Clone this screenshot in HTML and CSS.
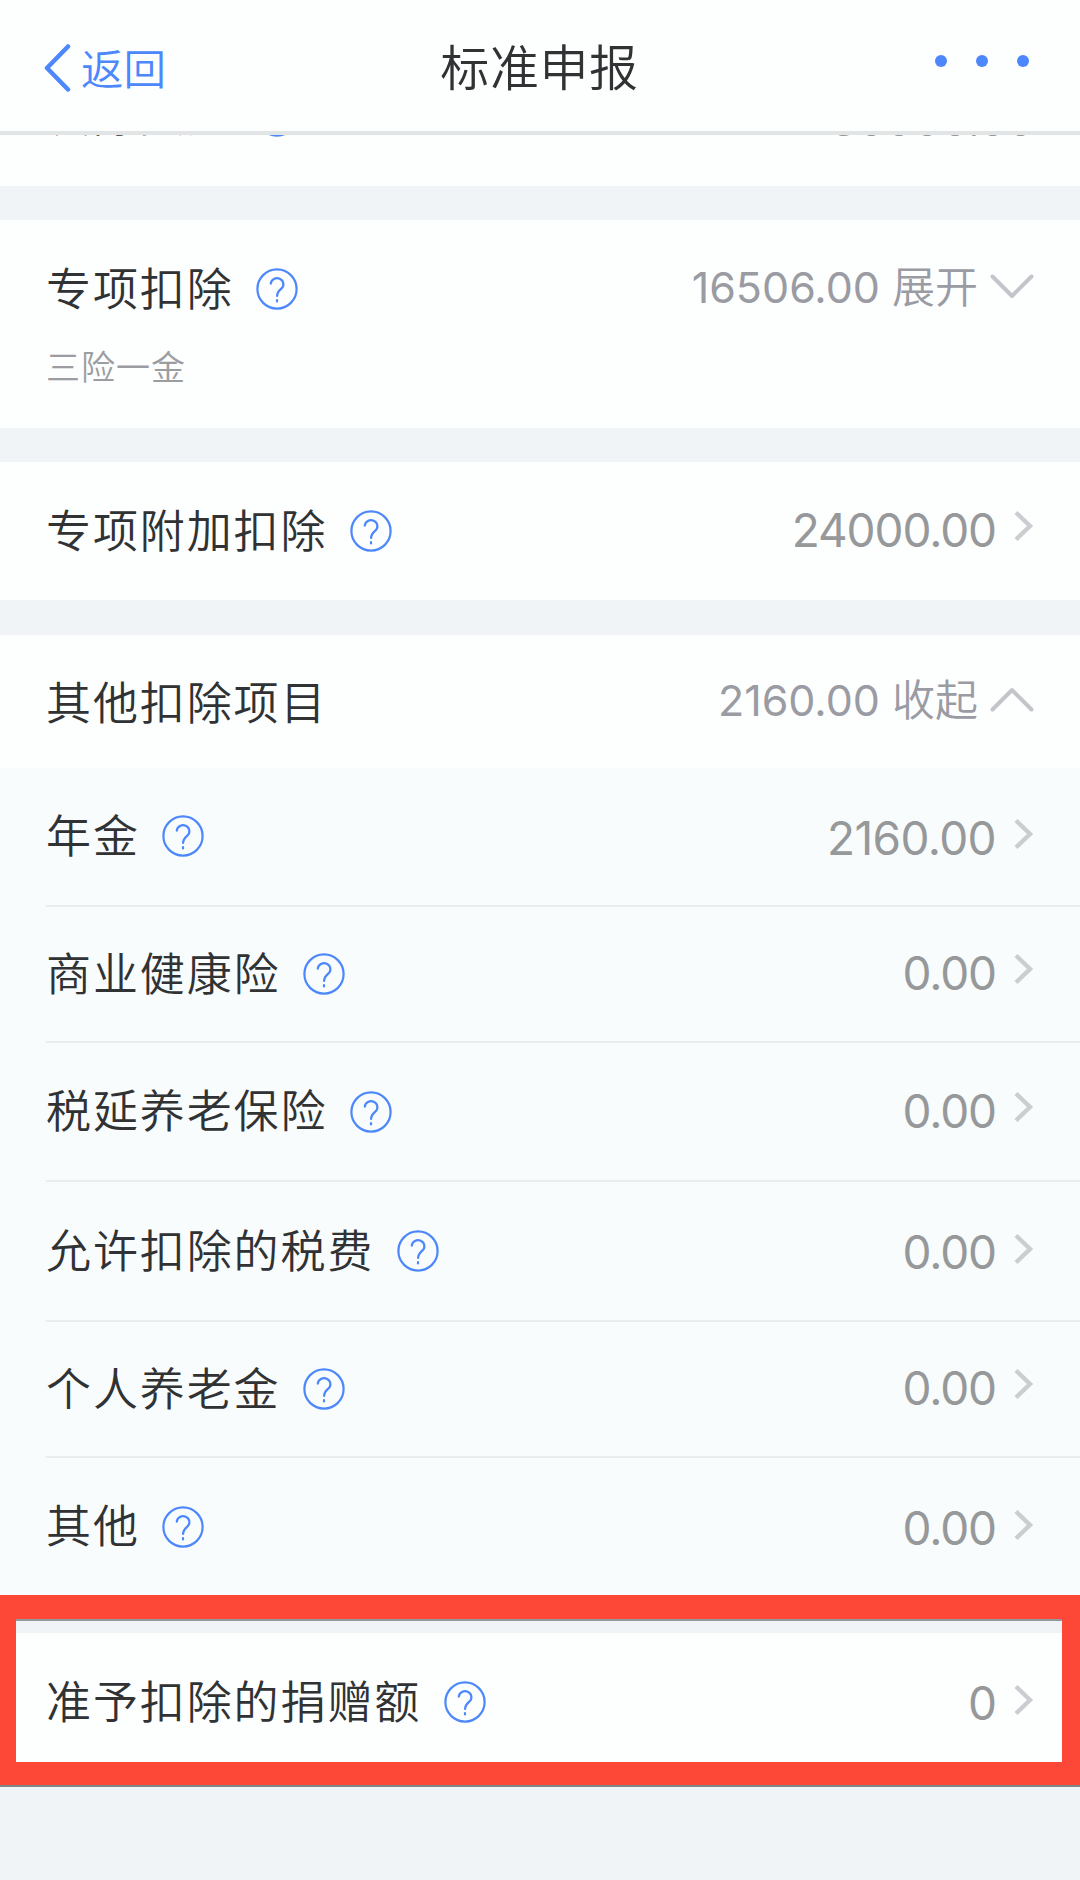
FILE: index.html
```html
<!DOCTYPE html>
<html lang="zh-CN">
<head>
<meta charset="utf-8">
<title>标准申报</title>
<link rel="stylesheet" href="styles.css">
</head>
<body>
<svg class="defs" aria-hidden="true">
  <symbol id="help" viewBox="0 0 42 42"><circle cx="21" cy="21" r="19.6"/><path d="M14.800 15.600a6.300 6 0 1 1 10.700 4.800c-2.800 2.500-4.400 3.800-4.400 7.600"/><path d="M21 32v1.400"/></symbol>
  <symbol id="next" viewBox="0 0 20 32"><path d="M2 2.500l14 13.500L2 29.500"/></symbol>
  <symbol id="down" viewBox="0 0 44 26"><path d="M2.500 2.500L22 22L41.500 2.500"/></symbol>
  <symbol id="up" viewBox="0 0 44 26"><path d="M2.500 22.500L22 3L41.500 22.500"/></symbol>
</svg>
<header class="navbar">
  <a class="back"><svg class="back-icon" viewBox="0 0 28 48"><path d="M24 2.500L3 24L24 45.500"/></svg><span class="back-text">返回</span></a>
  <h1 class="title">标准申报</h1>
  <div class="more"><i></i><i></i><i></i></div>
</header>
<main>
  <section class="row peek"><span class="label">减除费用</span><svg class="help"><use href="#help"/></svg><span class="value">60000.00</span></section>
  <section class="card special">
    <div class="row"><span class="label">专项扣除</span><svg class="help"><use href="#help"/></svg><span class="toggle">16506.00 <span class="action">展开</span></span><svg class="fold"><use href="#down"/></svg></div>
    <p class="note">三险一金</p>
  </section>
  <section class="row card additional"><span class="label">专项附加扣除</span><svg class="help"><use href="#help"/></svg><span class="value">24000.00</span><svg class="next"><use href="#next"/></svg></section>
  <section class="other">
    <div class="row group"><span class="label">其他扣除项目</span><span class="toggle">2160.00 <span class="action">收起</span></span><svg class="fold"><use href="#up"/></svg></div>
    <div class="list">
      <div class="row item annuity"><span class="label">年金</span><svg class="help"><use href="#help"/></svg><span class="value">2160.00</span><svg class="next"><use href="#next"/></svg></div>
      <div class="row item health"><span class="label">商业健康险</span><svg class="help"><use href="#help"/></svg><span class="value">0.00</span><svg class="next"><use href="#next"/></svg></div>
      <div class="row item deferred"><span class="label">税延养老保险</span><svg class="help"><use href="#help"/></svg><span class="value">0.00</span><svg class="next"><use href="#next"/></svg></div>
      <div class="row item taxes"><span class="label">允许扣除的税费</span><svg class="help"><use href="#help"/></svg><span class="value">0.00</span><svg class="next"><use href="#next"/></svg></div>
      <div class="row item pension"><span class="label">个人养老金</span><svg class="help"><use href="#help"/></svg><span class="value">0.00</span><svg class="next"><use href="#next"/></svg></div>
      <div class="row item misc"><span class="label">其他</span><svg class="help"><use href="#help"/></svg><span class="value">0.00</span><svg class="next"><use href="#next"/></svg></div>
    </div>
  </section>
  <section class="highlight">
    <div class="row donation"><span class="label">准予扣除的捐赠额</span><svg class="help"><use href="#help"/></svg><span class="value">0</span><svg class="next"><use href="#next"/></svg></div>
  </section>
</main>
</body>
</html>
```
FILE: styles.css
```css
* { box-sizing: border-box; }
body { margin: 0; width: 1080px; height: 1880px; overflow: hidden; background: #f0f4f7; color: #303234; font-family: Inter, "Noto Sans CJK SC", sans-serif; }
.defs { display: none; }
svg { flex: none; fill: none; stroke-linecap: round; stroke-linejoin: round; }
.navbar { display: grid; grid-template-columns: 1fr auto 1fr; align-items: center; height: 135px; padding: 0 51px 0 44px; border-bottom: 4px solid #e2e5e5; background: #fdfefe; }
.back { display: flex; align-items: center; gap: 9px; color: #4c87fb; }
.back-icon { width: 28px; height: 48px; stroke: currentColor; stroke-width: 4.500; margin-top: 5px; }
.back-text { font: 350 42.500px/60px "Noto Sans CJK SC", sans-serif; margin-top: 3px; }
.title { margin: -1px 0 0 6px; font: 350 49px/70px "Noto Sans CJK SC", sans-serif; letter-spacing: .6px; }
.more { display: flex; justify-content: flex-end; gap: 29px; margin-top: -10px; }
.more i { width: 12px; height: 12px; border-radius: 50%; background: #4c87fb; }
.row { --shift: 0px; --next-shift: 0px; display: flex; align-items: center; padding: 0 46px; }
.label { margin-top: -5px; font: 350 45px/66px "Noto Sans CJK SC", sans-serif; letter-spacing: 1.900px; }
.help { width: 42px; height: 42px; margin: 0 0 0 22.500px; stroke: #4c87fb; stroke-width: 2.200; }
.value { margin: calc(var(--shift) - 2px) 0 0 auto; font-size: 46px; line-height: 60px; letter-spacing: -1.100px; color: #96989a; }
.next { width: 20px; height: 32px; margin: var(--next-shift) 0 0 18px; stroke: #cbcdd0; stroke-width: 4.400; stroke-linecap: butt; stroke-linejoin: miter; }
.toggle { margin: -3px 0 0 auto; font-size: 43px; line-height: 60px; color: #9a9ba3; }
.action { font-weight: 350; }
.fold { width: 44px; height: 26px; margin: -3px 0 0 12px; stroke: #c3c5cb; stroke-width: 4; }
.peek { height: 51px; align-items: flex-start; overflow: hidden; background: #fdfefe; }
.peek .label { margin-top: -55px; }
.peek .help { margin-top: -40px; }
.peek .value { margin-top: -46px; }
.card { margin-top: 34px; background: #fdfefe; }
.special { height: 208px; padding-top: 36px; }
.special .label { margin-top: -2px; }
.group .label { margin-top: -2px; }
.special .help { margin-top: 2px; }
.note { margin: 21px 46px 0; font: 350 34px/50px "Noto Sans CJK SC", sans-serif; letter-spacing: 1px; color: #9c9da0; }
.additional { height: 138px; --next-shift: -10px; }
.other { margin-top: 35px; }
.group { height: 133px; background: #fdfefe; }
.list { background: #f8fcfd; }
.item { margin-left: 46px; padding-left: 0; border-bottom: 2px solid #e9eded; }
.annuity { height: 139px; --shift: 4px; --next-shift: -6px; }
.annuity .help { margin-top: -1px; }
.annuity .value { letter-spacing: -.600px; }
.health { height: 136px; --next-shift: -10px; }
.deferred { height: 139px; --next-shift: -9px; }
.taxes { height: 140px; --shift: 4px; --next-shift: -4px; }
.pension { height: 136px; --next-shift: -11px; }
.misc { height: 137px; border: 0; --shift: 5px; --next-shift: -3px; }
.highlight { height: 190px; border: solid #fe4837; border-width: 24px 18px 23px 16px; background: #fdfefe; box-shadow: inset 0 2px #92999b, inset 0 14px #f0f4f7, 0 2px #7f8789; }
.donation { height: 143px; padding: 23px 28px 0 30px; --shift: 4px; --next-shift: -5px; }
```
